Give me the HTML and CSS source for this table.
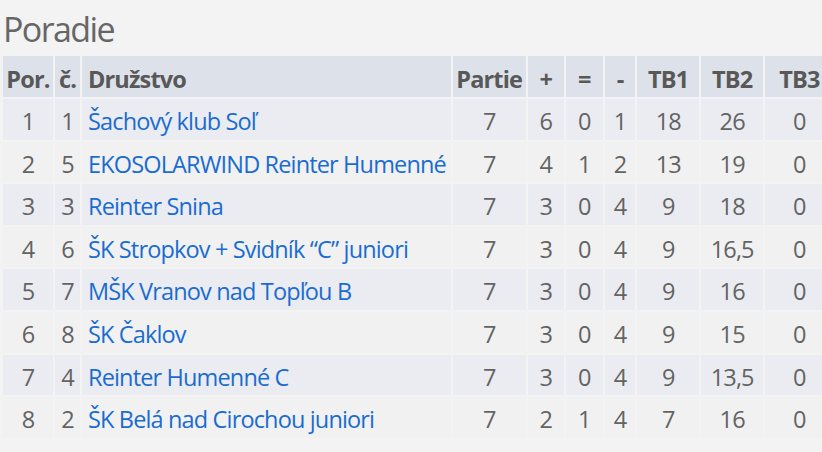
FILE: index.html
```html
<!DOCTYPE html>
<html lang="sk">
<head>
<meta charset="utf-8">
<title>Poradie</title>
<link rel="stylesheet" href="styles.css">
</head>
<body>
<div class="page">
  <h2 class="title">Poradie</h2>
  <table class="standings">
    <colgroup>
      <col class="c-por"><col class="c-no"><col class="c-team"><col class="c-games"><col class="c-w"><col class="c-d"><col class="c-l"><col class="c-tb1"><col class="c-tb2"><col class="c-tb3">
    </colgroup>
    <thead>
      <tr><th>Por.</th><th>č.</th><th class="team">Družstvo</th><th>Partie</th><th>+</th><th>=</th><th>-</th><th>TB1</th><th>TB2</th><th>TB3</th></tr>
    </thead>
    <tbody>
      <tr><td>1</td><td>1</td><td class="team"><a href="#">Šachový klub Soľ</a></td><td>7</td><td>6</td><td>0</td><td>1</td><td>18</td><td>26</td><td>0</td></tr>
      <tr><td>2</td><td>5</td><td class="team"><a href="#">EKOSOLARWIND Reinter Humenné</a></td><td>7</td><td>4</td><td>1</td><td>2</td><td>13</td><td>19</td><td>0</td></tr>
      <tr><td>3</td><td>3</td><td class="team"><a href="#">Reinter Snina</a></td><td>7</td><td>3</td><td>0</td><td>4</td><td>9</td><td>18</td><td>0</td></tr>
      <tr><td>4</td><td>6</td><td class="team"><a href="#">ŠK Stropkov + Svidník “C” juniori</a></td><td>7</td><td>3</td><td>0</td><td>4</td><td>9</td><td>16,5</td><td>0</td></tr>
      <tr><td>5</td><td>7</td><td class="team"><a href="#">MŠK Vranov nad Topľou B</a></td><td>7</td><td>3</td><td>0</td><td>4</td><td>9</td><td>16</td><td>0</td></tr>
      <tr><td>6</td><td>8</td><td class="team"><a href="#">ŠK Čaklov</a></td><td>7</td><td>3</td><td>0</td><td>4</td><td>9</td><td>15</td><td>0</td></tr>
      <tr><td>7</td><td>4</td><td class="team"><a href="#">Reinter Humenné C</a></td><td>7</td><td>3</td><td>0</td><td>4</td><td>9</td><td>13,5</td><td>0</td></tr>
      <tr><td>8</td><td>2</td><td class="team"><a href="#">ŠK Belá nad Cirochou juniori</a></td><td>7</td><td>2</td><td>1</td><td>4</td><td>7</td><td>16</td><td>0</td></tr>
    </tbody>
  </table>
</div>
</body>
</html>
```
FILE: styles.css
```css
html, body {
  margin: 0;
  padding: 0;
  background: #f3f3f3;
  overflow: hidden;
}
body {
  font-family: "Open Sans", "Noto Sans", "Liberation Sans", sans-serif;
  color: #666;
}
.page {
  padding: 0 0 0 1px;
}
.title {
  margin: 0;
  padding: 9px 0 0 2px;
  height: 54px;
  box-sizing: border-box;
  font-size: 34px;
  letter-spacing: -1.6px;
  font-weight: 400;
  line-height: 40px;
  color: #666;
}
.standings {
  border-collapse: separate;
  border-spacing: 2px;
  table-layout: fixed;
  width: 834px;
  font-size: 23.5px;
  letter-spacing: -0.85px;
}
.c-por { width: 50px; }
.c-no { width: 25px; }
.c-team { width: 368.7px; }
.c-games { width: 73px; }
.c-w { width: 36px; }
.c-d { width: 37px; }
.c-l { width: 30.7px; }
.c-tb1 { width: 61.7px; }
.c-tb2 { width: 62.3px; }
.c-tb3 { width: 68px; }
.standings th,
.standings td {
  padding: 5px 0 0;
  text-align: center;
  vertical-align: middle;
  white-space: nowrap;
  overflow: hidden;
}
.standings th {
  line-height: 36px;
  background: #dde1e9;
  color: #585858;
  font-weight: 700;
}
.standings td {
  line-height: 35.6px;
  color: #636363;
}
.standings .team {
  text-align: left;
  text-indent: 6px;
}
.standings tbody tr:nth-child(odd) td {
  background: #ebecf1;
}
.standings tbody tr:nth-child(even) td {
  background: #f1f1f1;
}
.standings a {
  color: #1a6cd0;
  text-decoration: none;
}
```
